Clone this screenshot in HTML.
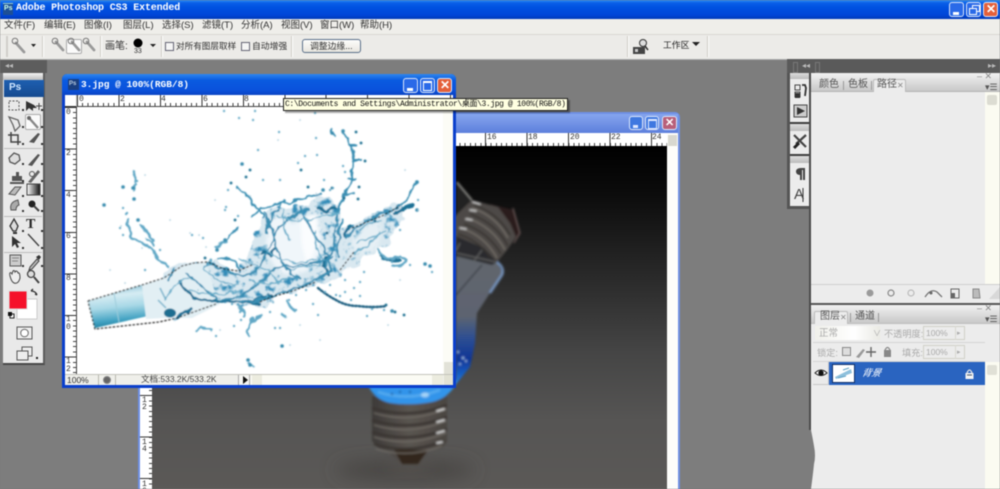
<!DOCTYPE html>
<html><head><meta charset="utf-8"><title>Adobe Photoshop CS3 Extended</title>
<style>
html,body{margin:0;padding:0;background:#7d7d7d}
#r{position:relative;width:1000px;height:489px;overflow:hidden;background:#7d7d7d;font-family:"Liberation Sans","Noto Sans CJK SC",sans-serif;color:#333;filter:blur(.45px)}
#r div,#r span,#r svg{position:absolute}
.t{white-space:nowrap;line-height:12px}
.sep{width:1px;background:#cfcdc6;border-right:1px solid #fff;top:36px;height:21px}
.wb{border-radius:3px;border:1px solid #dce6fa;box-sizing:border-box}
.rh{background-color:#fff;background-image:repeating-linear-gradient(90deg,#333 0 1px,transparent 1px 41.45px),repeating-linear-gradient(90deg,#444 0 1px,transparent 1px 5.18px);background-size:100% 100%,100% 3px;background-position:0 0,0 100%;background-repeat:no-repeat}
.rv{background-color:#fff;background-image:repeating-linear-gradient(180deg,#333 0 1px,transparent 1px 41.6px),repeating-linear-gradient(180deg,#444 0 1px,transparent 1px 5.2px);background-size:100% 100%,3px 100%;background-position:0 0,100% 0;background-repeat:no-repeat}
.n{font:8px/8px "Liberation Mono",monospace;color:#333}
.tab{height:12px;font-size:10px;line-height:12px;color:#555;white-space:nowrap}
</style></head><body><div id="r">

<!-- title bar -->
<div style="left:0;top:0;width:1000px;height:19px;background:linear-gradient(#2f8df0 0,#0a5fe8 3px,#0050e0 8px,#0046d8 15px,#003ab8 19px)"></div>
<div style="left:3px;top:3px;width:10px;height:11px;background:#1d4f96;border-top:1px solid #9cc"></div>
<div class="t" style="left:4px;top:3px;font:bold 7px/11px 'Liberation Sans';color:#cfe">Ps</div>
<div class="t" style="left:16px;top:3px;font:bold 10px/12px 'Liberation Mono',monospace;color:#fff;letter-spacing:-.14px">Adobe Photoshop CS3 Extended</div>
<div class="wb" style="left:949px;top:2px;width:15px;height:15px;background:#2a6ae8"><div style="left:3px;top:9px;width:6px;height:3px;background:#fff"></div></div>
<div class="wb" style="left:966px;top:2px;width:15px;height:15px;background:#2a6ae8"><div style="left:5px;top:2px;width:6px;height:5px;border:1px solid #fff"></div><div style="left:2px;top:5px;width:6px;height:5px;border:1px solid #fff;background:#2a6ae8"></div></div>
<div class="wb" style="left:983px;top:2px;width:15px;height:15px;background:#e4603a"><div class="t" style="left:2px;top:0;font:bold 12px/13px 'Liberation Sans';color:#fff">✕</div></div>

<!-- menu -->
<div style="left:0;top:19px;width:1000px;height:15px;background:#efeeea;border-bottom:1px solid #d9d8d2"></div>
<div class="t" style="left:4px;top:20px;font-size:9.500px;color:#333">文件(F)</div>
<div class="t" style="left:44px;top:20px;font-size:9.500px;color:#333">编辑(E)</div>
<div class="t" style="left:84px;top:20px;font-size:9.500px;color:#333">图像(I)</div>
<div class="t" style="left:123px;top:20px;font-size:9.500px;color:#333">图层(L)</div>
<div class="t" style="left:162px;top:20px;font-size:9.500px;color:#333">选择(S)</div>
<div class="t" style="left:202px;top:20px;font-size:9.500px;color:#333">滤镜(T)</div>
<div class="t" style="left:241px;top:20px;font-size:9.500px;color:#333">分析(A)</div>
<div class="t" style="left:281px;top:20px;font-size:9.500px;color:#333">视图(V)</div>
<div class="t" style="left:320px;top:20px;font-size:9.500px;color:#333">窗口(W)</div>
<div class="t" style="left:360px;top:20px;font-size:9.500px;color:#333">帮助(H)</div>

<!-- options -->
<div style="left:0;top:35px;width:1000px;height:24px;background:#ecebe8;border-bottom:1px solid #aaa"></div>
<div style="left:6px;top:36px;width:2px;height:21px;background:#d0cfca"></div>
<div class="sep" style="left:42px"></div><div class="sep" style="left:100px"></div>
<div class="sep" style="left:161px"></div><div class="sep" style="left:291px"></div>
<div class="sep" style="left:627px"></div><div class="sep" style="left:707px"></div>
<div style="left:66px;top:39px;width:16px;height:15px;background:#fafafa;border:1px solid #aaa;box-sizing:border-box;border-radius:2px"></div>
<svg style="left:0;top:34px" width="720" height="25" viewBox="0 0 720 25">
<g fill="none" stroke-linecap="round" stroke="#999" stroke-width="2.800"><path d="M16 9l8 9M56 8l7 8M72 8l7 8M87 8l7 8"/></g>
<g fill="none" stroke="#777" stroke-width="1"><circle cx="15" cy="7" r="2.800"/><circle cx="55" cy="7" r="2.800"/><circle cx="71" cy="7" r="2.800"/><circle cx="86" cy="7" r="2.800"/></g>
<path d="M31 10h5l-2.500 3zM150 10h6l-3 3zM692 8h8l-4 4z" fill="#222"/>
<circle cx="138" cy="9" r="4.500" fill="#000"/>
<path d="M633 13h12v7h-12z" fill="#444"/><circle cx="643" cy="9" r="3.500" fill="#ddd" stroke="#333"/><path d="M645 12l3 4" stroke="#333" stroke-width="1.500"/><path d="M635 15h3v3h-3z" fill="#ccc"/>
</svg>
<div class="t" style="left:105px;top:41px;font-size:10px">画笔:</div>
<div class="t" style="left:134px;top:48px;font-size:7px;line-height:8px;color:#333">33</div>
<div style="left:165px;top:42px;width:9px;height:9px;background:#f5f5f5;border:1px solid #667;box-sizing:border-box"></div>
<div class="t" style="left:176px;top:40px;font-size:8.600px">对所有图层取样</div>
<div style="left:241px;top:42px;width:9px;height:9px;background:#f5f5f5;border:1px solid #667;box-sizing:border-box"></div>
<div class="t" style="left:252px;top:40px;font-size:8.800px">自动增强</div>
<div style="left:302px;top:39px;width:59px;height:14px;background:linear-gradient(#fdfdfb,#e8e6df);border:1px solid #5a6f8a;border-radius:3px;box-sizing:border-box"></div>
<div class="t" style="left:310px;top:40px;font-size:8.800px">调整边缘...</div>
<div class="t" style="left:663px;top:39px;font-size:8.800px;color:#222">工作区</div>

<!-- toolbox -->
<div style="left:0;top:60px;width:47px;height:13px;background:#5d5d5d"></div>
<div class="t" style="left:5px;top:60px;font-size:8px;color:#bbb">◂◂</div>
<div style="left:3px;top:73px;width:42px;height:292px;background:#e9e9e9;border-bottom:2px solid #484848;border-right:2px solid #5c5c5c;box-sizing:border-box"></div>
<div style="left:3px;top:73px;width:40px;height:7px;background:linear-gradient(#f4f4f4,#bdbdbd)"></div>
<div style="left:4px;top:80px;width:40px;height:17px;background:linear-gradient(#1e5fb0,#154a90)"></div>
<div class="t" style="left:9px;top:82px;font:bold 10px/12px 'Liberation Sans';color:#cfe6ff">Ps</div>
<div style="left:25px;top:114px;width:16px;height:16px;background:#fafafa;border:1px solid #aaa;box-sizing:border-box;border-radius:2px"></div>
<svg style="left:0;top:73px" width="47" height="292" viewBox="0 73 47 292">
<g stroke="#bbb"><path d="M4 148.500h38M4 216.500h38M4 252.500h38"/></g>
<rect x="9" y="101" width="10" height="9" fill="none" stroke="#555" stroke-dasharray="2 1.500"/>
<path d="M26 101v10l3-3 4 3v-3l4 0-3-3z" fill="#333"/><path d="M36 106h6M39 103v7" stroke="#444"/>
<path d="M9 117l9 3 2 6-5 5-2-6z" fill="none" stroke="#666" stroke-width="1.300"/>
<path d="M30 119l8 9" stroke="#888" stroke-width="2.400"/><circle cx="29" cy="118" r="2" fill="#666"/>
<path d="M11 132v10h10M8 135h10v10" fill="none" stroke="#444" stroke-width="1.500"/>
<path d="M29 142l9-9 2 1-6 9z" fill="#555"/>
<path d="M9 158l5-5 5 2 1 5-5 4-5-2z" fill="#ddd" stroke="#555" stroke-width="1.300"/>
<path d="M28 165l10-11 2 1-8 11z" fill="#555"/>
<path d="M12 181v-5h4v-4h3v4h3v5zM10 182h14v2h-14z" fill="#555"/>
<path d="M28 182l10-12 2 2-9 11z" fill="#666"/><circle cx="32" cy="174" r="2.500" fill="none" stroke="#555"/>
<path d="M9 194l6-7h6l-6 8z" fill="#bbb" stroke="#555"/>
<rect x="27" y="184" width="13" height="11" fill="url(#gd)" stroke="#444"/>
<defs><linearGradient id="gd"><stop offset="0" stop-color="#fff"/><stop offset="1" stop-color="#111"/></linearGradient></defs>
<path d="M11 210q-2-8 7-10l1 5q-3 1-3 5z" fill="#aaa" stroke="#555"/>
<circle cx="32" cy="204" r="3.500" fill="#222"/><path d="M34 206l5 5" stroke="#444" stroke-width="2"/>
<path d="M14 219l4 7-2 5h-3l-3-5z" fill="#ddd" stroke="#333" stroke-width="1.300"/>
<path d="M13 232h4v2h-4z" fill="#333"/>
<path d="M12 236l0 11 3-3 2 4 2-1-2-4h4z" fill="#333"/>
<path d="M28 234l11 12" stroke="#444" stroke-width="1.400"/>
<path d="M10 255h11v11h-11z" fill="#ccc" stroke="#555"/><path d="M12 258h7M12 261h6" stroke="#888"/>
<path d="M30 267l7-8 2 2-7 8-3 1z" fill="#bbb" stroke="#444"/><path d="M36 257l3 3 2-3-2-2z" fill="#333"/>
<path d="M10 276c-1-4 1-4 2-2l1-3c1-1 2 0 2 1l1-1c1 0 2 1 2 2l1 0c1 1 1 3 1 5-1 4-3 6-6 5-2-1-3-3-4-7z" fill="#eee" stroke="#444"/>
<circle cx="31" cy="274" r="3.500" fill="#ddd" stroke="#444" stroke-width="1.300"/><path d="M34 277l5 6" stroke="#444" stroke-width="2"/>
<g fill="#333"><path d="M22 109h2v2h-2zM41 109h2v2h-2zM22 126h2v2h-2zM41 126h2v2h-2zM22 143h2v2h-2zM41 143h2v2h-2zM22 163h2v2h-2zM41 163h2v2h-2zM22 180h2v2h-2zM41 180h2v2h-2zM22 195h2v2h-2zM41 195h2v2h-2zM22 210h2v2h-2zM41 210h2v2h-2zM22 230h2v2h-2zM41 230h2v2h-2zM22 247h2v2h-2zM41 247h2v2h-2zM22 265h2v2h-2zM41 265h2v2h-2z"/></g>
<rect x="17" y="299" width="20" height="20" fill="#fff" stroke="#ccc"/>
<rect x="9" y="291" width="18" height="18" fill="#f5112a" stroke="#ddd"/>
<rect x="10" y="314" width="4" height="4" fill="#fff" stroke="#222"/><rect x="8" y="312" width="4" height="4" fill="#111"/>
<path d="M31 291c3 0 5 1 6 4M31 291l2-2M37 295l-2-1" fill="none" stroke="#333" stroke-width="1.300"/>
<rect x="17" y="327" width="15" height="12" fill="#eee" stroke="#555"/><circle cx="24.500" cy="333" r="3.800" fill="#fff" stroke="#666"/>
<rect x="22" y="347" width="10" height="9" fill="#eee" stroke="#555"/><rect x="17" y="351" width="11" height="9" fill="#eee" stroke="#555"/>
<path d="M36 357h2v2h-2z" fill="#222"/>
</svg>
<div class="t" style="left:26px;top:216px;font:bold 14px/18px 'Liberation Serif';color:#222">T</div>

<!-- back doc window -->
<div style="left:138px;top:112px;width:542px;height:377px;background:#6f90e4;border-radius:5px 5px 0 0"></div>
<div style="left:140px;top:114px;width:538px;height:19px;background:linear-gradient(#86a6ee,#5d80dc)"></div>
<div class="wb" style="left:629px;top:116px;width:14px;height:14px;background:#3f78e0"><div style="left:3px;top:8px;width:5px;height:3px;background:#dfe8ff"></div></div>
<div class="wb" style="left:645px;top:116px;width:14px;height:14px;background:#3f78e0"><div style="left:2px;top:2px;width:7px;height:7px;border:1px solid #dfe8ff;border-top-width:2px"></div></div>
<div class="wb" style="left:662px;top:116px;width:15px;height:14px;background:#b8607a"><div class="t" style="left:2px;top:0;font:bold 11px/12px 'Liberation Sans';color:#fff">✕</div></div>
<div class="rh" style="left:444px;top:133px;width:234px;height:13px;background-position:41px 0,0 100%"></div>
<div class="n" style="left:487px;top:134px">16</div><div class="n" style="left:528px;top:134px">18</div><div class="n" style="left:570px;top:134px">20</div><div class="n" style="left:611px;top:134px">22</div><div class="n" style="left:652px;top:134px">24</div>
<div style="left:667px;top:133px;width:11px;height:356px;background:#fdfdfa"></div>
<div style="left:668px;top:135px;width:9px;height:11px;background:#d8d8d0"></div>
<div class="rv" style="left:140px;top:388px;width:12px;height:101px;background-position:0 7px,100% 2px"></div>
<div class="n" style="left:142px;top:397px;width:6px;line-height:7px">1<br>2</div>
<div class="n" style="left:142px;top:439px;width:6px;line-height:7px">1<br>4</div>
<div class="n" style="left:142px;top:481px;width:6px;line-height:7px">1<br>6</div>
<div style="left:152px;top:146px;width:515px;height:343px;background:linear-gradient(#000 0,#0c0c0c 14%,#2c2c2c 40%,#454545 60%,#565554 80%,#5b5957 100%)"></div>

<svg style="left:152px;top:146px" width="515" height="343" viewBox="152 146 515 343">
<defs>
<filter id="b1" x="-30%" y="-30%" width="160%" height="160%"><feGaussianBlur stdDeviation="1"/></filter>
<filter id="b6" x="-40%" y="-80%" width="180%" height="260%"><feGaussianBlur stdDeviation="9"/></filter>
<linearGradient id="sc" x1="0" x2="1"><stop offset="0" stop-color="#3d3a38"/><stop offset=".5" stop-color="#5a5550"/><stop offset="1" stop-color="#4a4541"/></linearGradient>
<linearGradient id="gl" x1="0" x2="0" y1="0" y2="1"><stop offset="0" stop-color="#62666c"/><stop offset=".5" stop-color="#5d6470"/><stop offset=".66" stop-color="#2e4f92"/><stop offset=".82" stop-color="#0f3596"/><stop offset="1" stop-color="#1f78dc"/></linearGradient>
</defs>
<ellipse cx="405" cy="470" rx="70" ry="10" fill="#474543" filter="url(#b6)"/>
<ellipse cx="410" cy="468" rx="22" ry="4" fill="#7a716a" opacity=".4" filter="url(#b6)"/>
<g filter="url(#b1)">
<path d="M372 396h75v46l-5 6-14 3-10 13h-18l-12-13-10-3-6-7z" fill="url(#sc)"/>
<path d="M394 450l8 14h16l10-14z" fill="#33281f"/>
<g fill="none" stroke="#3a3632" stroke-width="2.600"><path d="M372 408q37 12 75-3M372 420q37 12 75-3M372 432q37 12 75-3M374 444q35 11 70-3"/></g>
<g fill="none" stroke="#76716b" stroke-width="1.100"><path d="M374 413q35 11 72-4M374 425q35 11 72-4M374 437q35 11 72-4M376 449q33 10 66-3"/></g>
<g stroke="#dcdcdc" stroke-width="1.800" stroke-linecap="round"><path d="M437 411l7-2M437 422l7-2M437 433l7-2M437 443l5-1"/></g>
<path d="M366 380h92q-8 18-26 22-22 4-42 1-18-4-24-23z" fill="#3094ea"/>
<path d="M378 392q30 10 62-2" fill="none" stroke="#7cc4f4" stroke-width="2.500" opacity=".5"/>
<ellipse cx="425" cy="395" rx="4" ry="2.500" fill="#cbe7fb" opacity=".7"/>
<g fill="#1c5ea6"><circle cx="392" cy="394" r="1.200"/><circle cx="400" cy="392" r="1.200"/><circle cx="410" cy="392" r="1.200"/></g>
<path d="M456 250l40 10 7 13-13 20-13 20-2 30-5 24-13 16h-1z" fill="url(#gl)"/>
<path d="M456 295l26-30" stroke="#33363c" stroke-width="1.200"/>
<path d="M497 262q8 6 5 13l-12 18" fill="none" stroke="#7fa4d4" stroke-width="2.500" opacity=".8"/>
<g fill="#a8cdf0"><circle cx="458" cy="352" r="1"/><circle cx="463" cy="358" r="1.200"/><circle cx="466" cy="361" r="1"/><circle cx="460" cy="364" r="1"/></g>
<path d="M456 182l16 18-8 14-8 4z" fill="#232323"/>
<path d="M457 182l15 18" stroke="#8e8e8a" stroke-width="1.500"/>
<path d="M490 204l23 6 7 23-5 6-14-20z" fill="#2b1b1c"/>
<path d="M513 208l7 25-6 10" fill="none" stroke="#6d5a58" stroke-width="1.200"/>
<path d="M472 200l26 7 12 16 6 14-9 13-10 12-46-12v-30z" fill="#4e4a46"/>
<path d="M456 236l28 12 13 14-5 3-36-9z" fill="#2a2b2d"/>
<path d="M460 243l-4 8M482 250l-8 11M456 253l40 9" stroke="#6a6a6a" stroke-width="1"/>
<g fill="none" stroke="#35322e" stroke-width="1.500"><path d="M474 205q24 8 36 30M470 214q26 9 38 32M464 224q24 8 37 30M458 234q22 7 32 24"/></g>
<g fill="none" stroke="#7f7a73" stroke-width="1"><path d="M472 208q24 8 36 30M467 218q26 9 38 32M461 228q24 8 36 30"/></g>
<g stroke="#d4d4d4" stroke-width="1.600" stroke-linecap="round"><path d="M473 202l7 2M470 210l6 1M466 219l6 1M460 228l6 1"/></g>
</g>
</svg>

<!-- front doc window -->
<div style="left:62px;top:74px;width:394px;height:314px;background:#0a3fcc;border-radius:5px 5px 0 0"></div>
<div style="left:62px;top:74px;width:394px;height:21px;background:linear-gradient(#2f86ee,#0a5be0 30%,#0a52dc 75%,#0a44c4);border-radius:5px 5px 0 0"></div>
<div style="left:68px;top:79px;width:11px;height:11px;background:#1a3f80"></div>
<div class="t" style="left:69px;top:80px;font:bold 6px/9px 'Liberation Sans';color:#bcd">Ps</div>
<div class="t" style="left:81px;top:79px;font:bold 9.500px/12px 'Liberation Mono',monospace;color:#fff;letter-spacing:-.02px">3.jpg @ 100%(RGB/8)</div>
<div class="wb" style="left:403px;top:78px;width:15px;height:15px;background:#2a6ae8"><div style="left:3px;top:9px;width:6px;height:3px;background:#fff"></div></div>
<div class="wb" style="left:420px;top:78px;width:15px;height:15px;background:#2a6ae8"><div style="left:2px;top:2px;width:7px;height:7px;border:1px solid #fff;border-top-width:2px"></div></div>
<div class="wb" style="left:437px;top:78px;width:15px;height:15px;background:#e4603a"><div class="t" style="left:2px;top:0;font:bold 12px/13px 'Liberation Sans';color:#fff">✕</div></div>
<div style="left:65px;top:95px;width:388px;height:279px;background:#fff"></div>
<div style="left:65px;top:95px;width:12px;height:12px;background:#fff;border-right:1px solid #bbb;border-bottom:1px solid #333;box-sizing:border-box"></div>
<div class="rh" style="left:77px;top:95px;width:376px;height:12px;border-bottom:1px solid #444;box-sizing:border-box"></div>
<div class="rv" style="left:65px;top:107px;width:12px;height:267px;border-right:1px solid #444;box-sizing:border-box"></div>
<div class="n" style="left:79px;top:96px">0</div><div class="n" style="left:120px;top:96px">2</div><div class="n" style="left:161px;top:96px">4</div><div class="n" style="left:203px;top:96px">6</div><div class="n" style="left:244px;top:96px">8</div>
<div class="n" style="left:66px;top:109px">0</div><div class="n" style="left:66px;top:150px">2</div><div class="n" style="left:66px;top:192px">4</div><div class="n" style="left:66px;top:233px">6</div><div class="n" style="left:66px;top:275px">8</div>
<div class="n" style="left:66px;top:316px;line-height:8px;width:6px">1<br>0</div><div class="n" style="left:66px;top:358px;line-height:8px;width:6px">1<br>2</div>
<div style="left:443px;top:107px;width:10px;height:267px;background:#fcfcf6"></div>
<div style="left:444px;top:362px;width:9px;height:12px;background:#e2e2d8"></div>

<!-- splash art -->
<svg style="left:77px;top:107px" width="366" height="267" viewBox="77 107 366 267">
<defs>
<filter id="bs" x="-5%" y="-5%" width="110%" height="110%"><feGaussianBlur stdDeviation=".5"/></filter>
<filter id="bl" x="-10%" y="-10%" width="120%" height="120%"><feGaussianBlur stdDeviation="1.500"/></filter>
<filter id="dis" x="-5%" y="-5%" width="110%" height="110%" color-interpolation-filters="sRGB"><feTurbulence type="fractalNoise" baseFrequency=".11" numOctaves="2" seed="4" result="n"/><feDisplacementMap in="SourceGraphic" in2="n" scale="7" xChannelSelector="R" yChannelSelector="G"/></filter>
<filter id="tex" filterUnits="userSpaceOnUse" x="77" y="107" width="366" height="267" color-interpolation-filters="sRGB">
<feTurbulence type="fractalNoise" baseFrequency=".08" numOctaves="2" seed="3" result="w"/>
<feDisplacementMap in="SourceGraphic" in2="w" scale="16" xChannelSelector="R" yChannelSelector="G" result="d"/>
<feTurbulence type="fractalNoise" baseFrequency=".13" numOctaves="3" seed="8" result="n"/>
<feColorMatrix in="n" type="matrix" values="0 0 0 0 .2  0 0 0 0 .55  0 0 0 0 .72  4.500 0 0 0 -2.350" result="c"/>
<feComposite in="c" in2="d" operator="in" result="m"/>
<feMerge><feMergeNode in="d"/><feMergeNode in="m"/></feMerge></filter>
<linearGradient id="bt" x1="0.15" y1="0" x2="0.3" y2="1"><stop offset="0" stop-color="#78b8cf"/><stop offset=".28" stop-color="#d6ecf3"/><stop offset=".55" stop-color="#a8d8e6"/><stop offset=".85" stop-color="#42a2c2"/><stop offset="1" stop-color="#1d7f9f"/></linearGradient>
</defs>
<g filter="url(#bs)">
<!-- soft body and mottled water -->
<path filter="url(#tex)" d="M160 278L182 264L207 262L235 272L250 250L262 222L275 205L300 208L320 196L338 205L340 230L352 225L375 213L400 205L404 215L396 232L380 248L358 262L338 276L318 285L290 292L262 304L215 306L178 318L160 318Z" fill="#d9e8f0"/>
<!-- clear lighter crown interior -->
<path d="M268 222q14-10 24 2 14-6 24-8 6 14 6 30-2 14-14 24-16 8-28 2-12-12-14-28z" fill="#f0f6fa" filter="url(#bl)"/>
<path d="M300 218l16-4 2 26-10 28-6-22z" fill="#fbfdfe" filter="url(#bl)"/>
<path d="M352 240q12-14 26-20 6 14-2 30-14 6-24 4z" fill="#e6f0f5" filter="url(#bl)"/>
<!-- bottle -->
<path d="M88 301l54-16 6 31-53 12z" fill="url(#bt)"/>
<path d="M114 293l5 29" stroke="#9cccdb" stroke-width="1"/>
<path d="M142 285l22-7 20-13 22-3 10 34 4 8-28 14-28 0-18 1z" fill="#e2eff4"/>
<ellipse cx="170" cy="313" rx="6" ry="4.500" fill="#1f6d90"/>
<path d="M160 288l6 12M158 300l8 8" stroke="#7ab4cc" stroke-width="1.500"/>
<!-- main strokes -->
<g filter="url(#dis)" fill="none" stroke-linecap="round">
<g stroke="#1f6f94" stroke-width="3">
<path d="M180 282q8 10 14 16 12 4 22 3 20 1 44 2"/>
<path d="M176 316q10-2 16-8"/>
<path d="M246 302q16-2 24-6"/>
<path d="M326 258l-4 10 8 6"/>
<path d="M262 252l8 3 6-5"/>
<path d="M396 213q10-5 17-8"/>
<path d="M344 236l6-10M318 208l8 4 10-4"/>
<path d="M382 256q6 6 18 4"/>
</g>
<g stroke="#3a8eb2" stroke-width="2">
<path d="M207 263q18 6 30 12 12 4 22-8 10-18 18-36 8-14 32-22"/>
<path d="M222 300q28-4 44-24 8-10 24-10 20 0 42-8"/>
<path d="M240 302q22 0 44-10 24-6 48-22"/>
<path d="M237 187q10 10 16 16 6 8 10 14"/>
<path d="M253 215q6-6 14-8 14-6 24-4 8-4 14-6 8-2 14-4"/>
<path d="M264 214q12 20 14 38 4 18 22 26M284 200q-14 16-18 34M300 206q10 24 24 42 6 10 6 24"/>
<path d="M337 212l-4 36-10 22M341 220q-4 20-2 38"/>
<path d="M345 238q18-16 32-22 16-5 24-10 8-8 12-18l4-6"/>
<path d="M187 274q16 14 30 26M176 268q-6 6-8 12M238 228q-8 6-12 14M218 260q10-4 18 2 4 4 4 10"/>
<path d="M343 133q6 6 8 12 4 8 2 14 0 14-2 22-4 8-6 10 0 8-4 14l-4 8"/>
<path d="M332 130q-2 4 3 6M350 145l6 0M352 161h9M348 178l7 2M346 196l8-4"/>
</g>
<g stroke="#6aaeca" stroke-width="1.400">
<path d="M240 260q24 6 40 22M262 248q24 20 54 12M278 216q20 8 36 2 14-4 24-4M290 240q-10-14-6-30M316 230q-4 14 8 30M358 244q14-8 28-12M360 230q8-8 20-10M354 254q14-6 26-22"/>
<path d="M190 290q20 8 50 0M166 300q6-16 22-22M204 270q18 14 34 16M290 270q16-4 30-4M250 280q20 8 40-4"/>
</g>
<g stroke="#62a8c6" stroke-width="2.400">
<path d="M128 220q0 10 3 18 8 4 18 9 6 6 11 13 4 4 8 7"/>
<path d="M134 172q2 6 1 10M136 184l-2 6M142 226q6 6 10 14M146 238q6 4 8 8"/>
<path d="M217 248q6-8 10-6M205 268q4-4 6-7"/>
<path d="M379 250q2 6 8 8 8 2 14-2 4 2 4 6-4 6-12 4"/>
<path d="M253 318q-6 10-3 18M252 322q6-4 10-8M238 306q8 4 6 10M286 300q4 8 8 10M286 318l-4-4"/>
<path d="M197 330q4-4 8-2M203 328l8 4M248 362l4 6"/>
</g>
</g>
<path d="M318 288q10 8 18 12 10 6 22 6 16 2 28 0" fill="none" stroke="#1f5f80" stroke-width="2.400" stroke-dasharray="1.500 2" stroke-linecap="round"/>
<g stroke-linecap="round" fill="none">
<path stroke="#3a8cae" stroke-width="3.500" d="M242 164h.1M134 199h.1M133 188h.1M123 187h.1M104 205h.1M417 182h.1M417 210h.1M425 264h.1M430 266h.1M392 311h.1M282 346h.1M248 360h.1M250 365h.1M217 250h.1M225 240h.1M138 220h.1M343 131h.1M332 133h.1M323 190h.1"/>
<path stroke="#1f6e90" stroke-width="2.700" d="M231 183h.1M235 220h.1M250 170h.1M246 177h.1M301 170h.1M359 187h.1M358 199h.1M361 143h.1M365 161h.1M344 198h.1M327 233h.1M375 221h.1M386 305h.1M395 312h.1M404 315h.1M356 132h.1M332 188h.1M308 187h.1M205 258h.1"/>
<path stroke="#5fa6c4" stroke-width="2.200" d="M239 118h.1M224 111h.1M255 111h.1M253 120h.1M279 132h.1M315 113h.1M316 138h.1M258 150h.1M263 180h.1M280 180h.1M298 163h.1M305 156h.1M317 155h.1M330 190h.1M324 180h.1M333 188h.1M343 166h.1M345 172h.1M137 181h.1M123 208h.1M127 213h.1M120 228h.1M123 235h.1M126 214h.1M225 210h.1M226 207h.1M238 216h.1M228 190h.1M267 296h.1M270 312h.1M280 328h.1M296 295h.1M296 310h.1M313 304h.1M318 315h.1M325 292h.1M340 296h.1M351 300h.1M367 316h.1M372 309h.1M384 310h.1M410 265h.1M432 272h.1M241 320h.1M234 326h.1M275 328h.1M216 336h.1M232 304h.1M240 312h.1M192 235h.1M203 238h.1M160 250h.1M145 270h.1M400 230h.1M418 200h.1M364 272h.1M360 282h.1M345 280h.1M354 288h.1M336 295h.1M306 290h.1M289 300h.1M392 262h.1M398 258h.1M345 292h.1M330 285h.1M360 296h.1"/>
<path stroke="#a4cbda" stroke-width="1.600" d="M121 226h.1M142 248h.1M170 220h.1M190 233h.1M199 235h.1M246 270h.1M300 120h.1M278 140h.1M206 247h.1M320 340h.1M290 345h.1M220 330h.1M198 290h.1M110 270h.1M125 283h.1M210 292h.1M405 170h.1M418 210h.1M388 325h.1M250 196h.1M215 200h.1M400 280h.1M300 325h.1M145 175h.1"/>
</g>
<path d="M88 301l54-16 22-7 18-12 12-3 14-1 16 7 14 2 14-6M216 304l-39 14-18 4-64 7-7-28M260 302q12-6 30-10l26-10M352 228l30-12 18-10M340 270l14-18" fill="none" stroke="#111" stroke-width="1.100" stroke-dasharray="2.500 1.500"/>
</g>
</svg>

<!-- status bar -->
<div style="left:65px;top:374px;width:388px;height:11px;background:#efefea;border-top:1px solid #c4c4bc;box-sizing:border-box"></div>
<div class="t" style="left:67px;top:375px;font-size:8.500px;line-height:10px;color:#333">100%</div>
<div style="left:98px;top:375px;width:1px;height:10px;background:#b8b8b0"></div><div style="left:115px;top:375px;width:1px;height:10px;background:#b8b8b0"></div>
<div style="left:103px;top:376px;width:6px;height:6px;border-radius:4px;background:#666;border:1px solid #888"></div>
<div class="t" style="left:141px;top:374px;font-size:8.500px;line-height:11px;color:#444">文档:533.2K/533.2K</div>
<div style="left:238px;top:375px;width:12px;height:10px;background:#f5f5f2;border-left:1px solid #aaa;border-right:1px solid #aaa;box-sizing:border-box"></div>
<div style="left:243px;top:376px;width:0;height:0;border-left:5px solid #111;border-top:4px solid transparent;border-bottom:4px solid transparent"></div>
<div style="left:251px;top:375px;width:192px;height:10px;background:#fbfbf4"></div>
<div style="left:252px;top:375px;width:10px;height:10px;background:#ececdf"></div>
<div style="left:432px;top:375px;width:11px;height:10px;background:#ececdf"></div>
<div style="left:444px;top:375px;width:9px;height:10px;background:#e2e2d4"></div>

<!-- tooltip -->
<div style="left:283px;top:98px;width:285px;height:13px;background:#ffffe1;border:1px solid #222;box-sizing:border-box;box-shadow:2px 2px 1px rgba(0,0,0,.35)"></div>
<div class="t" style="left:285px;top:99px;font:8px/11px 'Liberation Mono','Noto Sans CJK SC',monospace;color:#111;letter-spacing:-.38px">C:\Documents and Settings\Administrator\桌面\3.jpg @ 100%(RGB/8)</div>

<!-- right panels -->
<div style="left:787px;top:59px;width:213px;height:14px;background:#5a5a5a"></div>
<div class="t" style="left:802px;top:60px;font-size:8px;color:#bbb">◂◂</div>
<div class="t" style="left:988px;top:60px;font-size:8px;color:#bbb">▸▸</div>
<div style="left:793px;top:62px;width:3px;height:9px;border:1px solid #777"></div><div style="left:815px;top:62px;width:3px;height:9px;border:1px solid #777"></div>
<div style="left:787px;top:73px;width:23px;height:136px;background:#555"></div>
<div style="left:790px;top:73px;width:19.500px;height:133px;background:#ececec"></div>
<div style="left:790px;top:73px;width:20px;height:6px;background:linear-gradient(#ddd,#bbb)"></div>
<div style="left:790px;top:122px;width:20px;height:2px;background:#3d3d3d"></div>
<div style="left:790px;top:124px;width:20px;height:7px;background:linear-gradient(#ddd,#bbb)"></div>
<div style="left:790px;top:154px;width:20px;height:2px;background:#3d3d3d"></div>
<div style="left:790px;top:156px;width:20px;height:7px;background:linear-gradient(#ddd,#bbb)"></div>
<div style="left:809px;top:73px;width:2px;height:416px;background:#4c4c4c"></div>
<svg style="left:790px;top:80px" width="20" height="128" viewBox="790 80 20 128">
<path d="M795 85h5v5h-5zM795 92h5v5h-5z" fill="none" stroke="#444"/><path d="M795 93h5v5h-5z" fill="#333"/><path d="M802 85h3l1 3-1 8" fill="none" stroke="#333" stroke-width="1.800"/>
<rect x="794" y="105" width="13" height="12" fill="#ccc" stroke="#444"/><path d="M797 107v8l8-4z" fill="#333"/>
<path d="M794 135l12 12" stroke="#444" stroke-width="2.200"/><path d="M806 135l-10 9" stroke="#444" stroke-width="2.200"/><path d="M794 148l5-5" stroke="#222" stroke-width="3"/>
<path d="M801 168h4v12h-2v-10h-1v10h-2v-5c-3 0-4-2-4-3.500s1-3.500 5-3.500z" fill="#444"/>
<path d="M803 188v14" stroke="#333"/>
</svg>
<div class="t" style="left:794px;top:186px;font:15px/17px 'Liberation Sans';color:#444">A</div>

<div style="left:811px;top:73px;width:189px;height:230px;background:#ececec"></div>
<div style="left:811px;top:73px;width:189px;height:18px;background:linear-gradient(#f2f2f2,#c8c8c8)"></div>
<div style="left:811px;top:91px;width:189px;height:1px;background:#b5b5b5"></div>
<div style="left:985px;top:92px;width:15px;height:192px;background:#fbfbf1"></div>
<div style="left:987px;top:95px;width:10px;height:10px;background:#dcdcd2;border-radius:2px"></div>
<div style="left:873px;top:79px;width:33px;height:13px;background:#ececec;border:1px solid #bbb;border-bottom:0;box-sizing:border-box;border-radius:2px 2px 0 0"></div>
<div class="tab" style="left:819px;top:79px">颜色</div><div style="left:843px;top:81px;width:1px;height:9px;background:#999"></div>
<div class="tab" style="left:848px;top:79px">色板</div><div style="left:871px;top:81px;width:1px;height:9px;background:#999"></div>
<div class="tab" style="left:877px;top:79px">路径</div><div class="t" style="left:897px;top:80px;font-size:8px;line-height:11px;color:#888">✕</div>
<div class="t" style="left:977px;top:70px;font-size:9px;color:#888">– ✕</div>
<div class="t" style="left:985px;top:82px;font-size:9px;line-height:11px;color:#555">▾☰</div>

<div style="left:811px;top:284px;width:189px;height:19px;background:#ececec;border-top:1px solid #cfcfcf;box-sizing:border-box"></div>
<svg style="left:811px;top:284px" width="189" height="19" viewBox="811 284 189 19">
<circle cx="870" cy="293" r="3.500" fill="#9a9a9a"/><circle cx="891" cy="293" r="3" fill="none" stroke="#888" stroke-width="1.200"/><circle cx="911" cy="293" r="3" fill="none" stroke="#bbb" stroke-width="1.200"/>
<path d="M925 297q6-9 12-5l5 5" fill="none" stroke="#777" stroke-width="1.300"/><circle cx="931" cy="293" r="1.500" fill="#666"/>
<path d="M951 289h8v9h-8z" fill="none" stroke="#666"/><path d="M951 293h4v5h-4z" fill="#666"/>
<path d="M973 289h6l1 9h-7z" fill="#bbb" stroke="#888"/>
<path d="M1000 287l-11 12h11z" fill="#d8d8d8"/>
</svg>
<div style="left:811px;top:303px;width:189px;height:2px;background:#555"></div>

<div style="left:811px;top:305px;width:189px;height:184px;background:#ececec"></div>
<div style="left:811px;top:305px;width:189px;height:18px;background:linear-gradient(#f2f2f2,#c8c8c8)"></div>
<div style="left:811px;top:323px;width:189px;height:1px;background:#bdbdbd"></div>
<div style="left:814px;top:311px;width:34px;height:13px;background:#ececec;border:1px solid #bbb;border-bottom:0;box-sizing:border-box;border-radius:2px 2px 0 0"></div>
<div class="tab" style="left:820px;top:311px">图层</div><div class="t" style="left:840px;top:312px;font-size:8px;line-height:11px;color:#888">✕</div>
<div style="left:850px;top:313px;width:1px;height:9px;background:#999"></div>
<div class="tab" style="left:855px;top:311px">通道</div>
<div style="left:878px;top:313px;width:1px;height:9px;background:#999"></div>
<div class="t" style="left:977px;top:302px;font-size:9px;color:#888">– ✕</div>
<div class="t" style="left:985px;top:314px;font-size:9px;line-height:11px;color:#555">▾☰</div>

<div style="left:815px;top:326px;width:65px;height:14px;background:linear-gradient(90deg,#f0f0ea,#fff 60%,#eaeae4)"></div>
<div class="t" style="left:819px;top:328px;font-size:9.500px;line-height:12px;color:#aaa">正常</div>
<div class="t" style="left:873px;top:328px;font-size:8px;line-height:12px;color:#aaa">∨</div>
<div class="t" style="left:884px;top:328px;font-size:9.200px;line-height:12px;color:#aaa">不透明度:</div>
<div style="left:923px;top:326px;width:42px;height:14px;border:1px solid #d0d0c8;box-sizing:border-box;background:#ececec"></div><div style="left:955px;top:326px;width:1px;height:14px;background:#d8d8d0"></div>
<div class="t" style="left:926px;top:328px;font-size:8.500px;line-height:11px;color:#aaa">100%</div>
<div class="t" style="left:957px;top:328px;font-size:7px;line-height:11px;color:#aaa">▸</div>
<div style="left:813px;top:342px;width:172px;height:1px;background:#d4d4d4"></div>
<div class="t" style="left:817px;top:347px;font-size:9.200px;line-height:12px;color:#aaa">锁定:</div>
<svg style="left:840px;top:344px" width="70" height="16" viewBox="840 344 70 16">
<rect x="842.500" y="347.500" width="8" height="8" fill="#ddd" stroke="#888"/>
<path d="M856 357l7-8 2 1-6 8z" fill="#999"/>
<path d="M871 347v10M866 352h10" stroke="#666" stroke-width="1.400"/>
<path d="M884 350h7v7h-7z" fill="#888"/><path d="M885 350q2.500-5 5 0" fill="none" stroke="#888" stroke-width="1.200"/>
</svg>
<div class="t" style="left:902px;top:347px;font-size:9.200px;line-height:12px;color:#aaa">填充:</div>
<div style="left:923px;top:345px;width:42px;height:14px;border:1px solid #d0d0c8;box-sizing:border-box;background:#ececec"></div><div style="left:955px;top:345px;width:1px;height:14px;background:#d8d8d0"></div>
<div class="t" style="left:926px;top:347px;font-size:8.500px;line-height:11px;color:#aaa">100%</div>
<div class="t" style="left:957px;top:347px;font-size:7px;line-height:11px;color:#aaa">▸</div>
<div style="left:813px;top:361px;width:172px;height:1px;background:#d4d4d4"></div>
<div style="left:813px;top:362px;width:16px;height:23px;background:#eaeaea;border-right:1px solid #c8c8c8;border-bottom:1px solid #c8c8c8;box-sizing:border-box"></div>
<svg style="left:814px;top:367px" width="14" height="12" viewBox="0 0 14 12"><path d="M1 6q6-6 12 0-6 5-12 0z" fill="#fff" stroke="#222"/><circle cx="7" cy="6" r="2.700" fill="#111"/></svg>
<div style="left:829px;top:362px;width:156px;height:23px;background:#2a64c0"></div>
<div style="left:832px;top:364px;width:23px;height:19px;background:#fff;border:1px solid #10306a;box-sizing:border-box"></div>
<svg style="left:833px;top:365px" width="21" height="17" viewBox="0 0 21 17"><path d="M2 12l8-4 8-4 1 4-8 3-8 3z" fill="#8fc0dc"/><path d="M10 5l6-2M5 13l8-2" stroke="#5ca0c4"/></svg>
<div class="t" style="left:862px;top:367px;font-size:9.500px;line-height:13px;color:#fff;font-style:italic;transform:skewX(-12deg)">背景</div>
<svg style="left:964px;top:368px" width="11" height="12" viewBox="0 0 11 12"><path d="M1.500 5h8v6h-8z" fill="#f4f4f4"/><path d="M3 5q2.500-6 5 0" fill="none" stroke="#e4e4e4" stroke-width="1.300"/><path d="M3 7h5" stroke="#456"/></svg>
<div style="left:985px;top:362px;width:15px;height:127px;background:#fbfbf1"></div>
<div style="left:987px;top:365px;width:10px;height:10px;background:#e0e0d6;border-radius:2px"></div>
<svg style="left:805px;top:430px" width="14" height="59" viewBox="0 0 14 59"><path d="M0 0h6q2 10 3 16 2 10 0 18-1 10-3 25h-6z" fill="#7d7d7d"/></svg>
</div></body></html>
